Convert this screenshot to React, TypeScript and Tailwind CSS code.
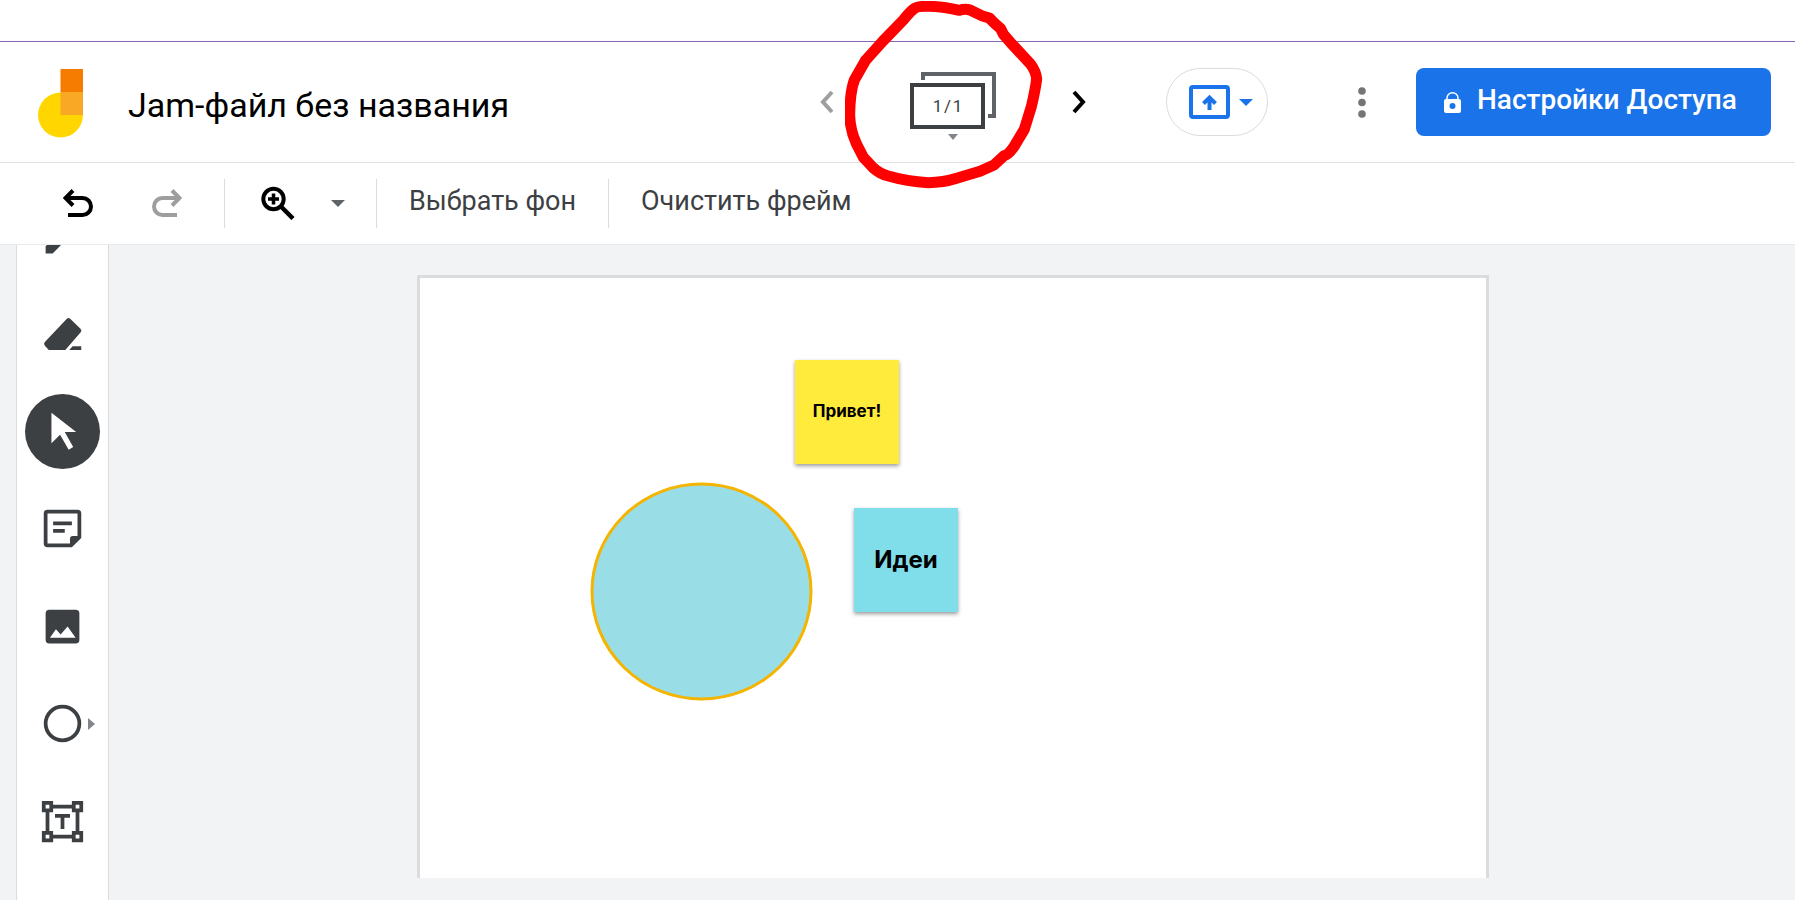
import { useState } from "react"
import type { ReactNode } from "react"

type Tool = {
  id: string
  label: string
  icon: ReactNode
  more?: boolean
}

const tools: Tool[] = [
  {
    id: "pen",
    label: "Перо",
    icon: (
      <path d="M3 17.25V21h3.75L17.81 9.94l-3.75-3.75L3 17.25zM20.71 7.04a1 1 0 0 0 0-1.41l-2.34-2.34a1 1 0 0 0-1.41 0l-1.83 1.83 3.75 3.75 1.83-1.83z" />
    ),
  },
  {
    id: "eraser",
    label: "Ластик",
    icon: (
      <>
        <path d="M16.1 3.6l5.5 5.3q.9.9.1 1.9l-8.2 9.4H4.7l-2-2.1q-1-1.1 0-2.2L14.2 3.7q1-.9 1.9-.1z" />
        <path d="M15.6 20.2l1.8-2H22v2z" />
      </>
    ),
  },
  {
    id: "select",
    label: "Выбрать",
    icon: <path d="M6.1 2v16.3l4.6-4.6 4.6 8 2.4-1.4-4.5-8h6.1z" />,
  },
  {
    id: "note",
    label: "Стикер",
    icon: (
      <>
        <path
          fillRule="evenodd"
          d="M4 2h16a2 2 0 0 1 2 2v13l-5 5H4a2 2 0 0 1-2-2V4a2 2 0 0 1 2-2zm0 2v16h12v-2.500a1.500 1.500 0 0 1 1.500-1.500H20V4z"
        />
        <path d="M7 8.200h10v2H7zM7 12.200h6.200v2H7z" />
      </>
    ),
  },
  {
    id: "image",
    label: "Изображение",
    icon: (
      <path
        fillRule="evenodd"
        d="M5 3h14a2 2 0 0 1 2 2v14a2 2 0 0 1-2 2H5a2 2 0 0 1-2-2V5a2 2 0 0 1 2-2zm.300 15h13.700l-4.300-6-3.700 4.300-2.500-2.900z"
      />
    ),
  },
  {
    id: "shape",
    label: "Круг",
    more: true,
    icon: <circle cx="12" cy="12" r="9" fill="none" stroke="currentColor" strokeWidth="2" />,
  },
  {
    id: "text",
    label: "Текстовое поле",
    icon: (
      <>
        <path
          fillRule="evenodd"
          d="M1 1h6v2h10V1h6v6h-2v10h2v6h-6v-2H7v2H1v-6h2V7H1zm6 4v2H5v10h2v2h10v-2h2V7h-2V5zM3 3v2h2V3zm16 0v2h2V3zM3 19v2h2v-2zm16 0v2h2v-2z"
        />
        <path d="M8 8h8v2h-3v6h-2v-6H8z" />
      </>
    ),
  },
]

function Logo() {
  return (
    <svg width="45" height="69" viewBox="0 0 45 69" aria-hidden="true">
      <circle cx="22.500" cy="46" r="22.500" fill="#ffd600" />
      <path d="M22.500 0H45v23H22.500z" fill="#f57c00" />
      <path d="M22.500 23H45v23H22.500z" fill="#f9a825" />
    </svg>
  )
}

function Caret({ className }: { className?: string }) {
  return (
    <svg width="14" height="7" viewBox="0 0 14 7" fill="currentColor" className={className} aria-hidden="true">
      <path d="M0 0h14L7 7z" />
    </svg>
  )
}

function Chevron({ className }: { className?: string }) {
  return (
    <svg width="14" height="24" viewBox="0 0 14 24" fill="none" stroke="currentColor" strokeWidth="4" className={className} aria-hidden="true">
      <path d="M2 2l9 10-9 10" />
    </svg>
  )
}

function Arrow({ className }: { className?: string }) {
  return (
    <svg width="30" height="30" viewBox="0 0 30 30" fill="none" stroke="currentColor" strokeWidth="4" className={className} aria-hidden="true">
      <path d="M10 1.500L2.500 9l7.500 7.500M3 9h16.500a8.500 8.500 0 0 1 0 17H5" />
    </svg>
  )
}

// hand drawn marker around the frame counter
function Marker() {
  return (
    <svg
      width="198"
      height="188"
      viewBox="135 3 594 564"
      fill="none"
      stroke="#ff0000"
      strokeWidth="33"
      strokeLinejoin="round"
      strokeLinecap="round"
      className="absolute -left-[65px] -top-[71px] z-10 max-w-none pointer-events-none"
      aria-hidden="true"
    >
      <path d="M478 31Q425 19 385 19Q350 18 340 28Q328 38 310 60L250 122L196 182L163 240Q150 275 149 345Q150 390 170 433L190 472L218 502Q240 522 265 528Q320 544 385 548Q430 548 470 535L540 514L582 495L612 467Q625 465 642 440L673 388Q684 352 694 320Q706 270 710 237Q708 215 692 193L632 128L611 104L602 86L584 70L568 54L545 47L510 30Q495 25 478 31z" />
    </svg>
  )
}

function Header() {
  return (
    <header className="flex h-[121px] items-start border-b border-[#e0e0e0] pl-[38px] pr-6 pt-[26px]">
      <div className="flex items-start pt-px">
        <a href="#" aria-label="Jamboard">
          <Logo />
        </a>
        <h1 className="ml-[45px] mt-4 whitespace-nowrap text-[34px] leading-10 text-black">Jam-файл без названия</h1>
      </div>

      <div className="ml-auto flex shrink-0 items-center">
        <nav className="flex items-center" aria-label="Фреймы">
          <button type="button" aria-label="Предыдущий фрейм" className="text-[#9e9e9e]">
            <Chevron className="rotate-180" />
          </button>
          <button type="button" className="relative mx-[76px] h-[60px] w-[86px]">
            <svg width="75" height="46" viewBox="0 0 75 46" fill="none" stroke="#5f6368" strokeWidth="4" className="absolute left-[11px] top-0" aria-hidden="true">
              <path d="M2 8V2h71v42h-6" />
            </svg>
            <span className="absolute left-0 top-[11px] flex h-[46px] w-[75px] items-center justify-center border-4 border-[#3c4043] text-[17px] leading-none text-[#3c4043]">
              1&#8202;/&#8202;1
            </span>
            <svg width="10" height="6" viewBox="0 0 10 6" fill="#80868b" className="absolute left-[38px] top-[62px]" aria-hidden="true">
              <path d="M0 0h10L5 6z" />
            </svg>
            <Marker />
          </button>
          <button type="button" aria-label="Следующий фрейм" className="text-black">
            <Chevron />
          </button>
        </nav>

        <button
          type="button"
          aria-label="Открыть на устройстве"
          className="ml-20 flex h-[68px] w-[102px] items-center justify-center gap-[9px] rounded-full border border-[#dadce0] pl-2 text-[#1a73e8]"
        >
          <svg width="41" height="34" viewBox="0 0 41 34" fill="none" stroke="currentColor" strokeWidth="4" aria-hidden="true">
            <rect x="2" y="2" width="37" height="30" rx="2" />
            <path d="M20.500 25V13M14.500 18.500l6-6 6 6" />
          </svg>
          <Caret />
        </button>

        <button type="button" aria-label="Другие действия" className="ml-[90px] text-[#757575]">
          <svg width="8" height="31" viewBox="0 0 8 31" fill="currentColor" aria-hidden="true">
            <circle cx="4" cy="4" r="3.800" />
            <circle cx="4" cy="15.500" r="3.800" />
            <circle cx="4" cy="27" r="3.800" />
          </svg>
        </button>

        <button
          type="button"
          className="ml-[50px] flex h-[68px] w-[355px] items-center gap-4 whitespace-nowrap rounded-lg bg-[#1a73e8] pb-1 pl-7 text-[28px] font-medium text-white"
        >
          <svg width="17" height="21" viewBox="0 0 17 21" fill="currentColor" className="mt-1" aria-hidden="true">
            <path
              fillRule="evenodd"
              d="M2 7h13a2 2 0 0 1 2 2v10a2 2 0 0 1-2 2H2a2 2 0 0 1-2-2V9a2 2 0 0 1 2-2zm6.500 4a3 3 0 1 0 0 6 3 3 0 0 0 0-6z"
            />
            <path d="M3 8V6a5.500 5.200 0 0 1 11 0v2" fill="none" stroke="currentColor" strokeWidth="1.500" />
          </svg>
          Настройки Доступа
        </button>
      </div>
    </header>
  )
}

function Toolbar() {
  return (
    <div className="flex h-[82px] items-center border-b border-[#e8eaed] pl-[63px] text-[27px] text-[#3c4043]">
      <button type="button" aria-label="Отменить" className="text-black">
        <Arrow />
      </button>
      <button type="button" aria-label="Повторить" className="ml-[59px] text-[#9e9e9e]">
        <Arrow className="-scale-x-100" />
      </button>
      <div className="ml-[42px] h-[49px] w-px bg-[#dadce0]" />
      <button type="button" aria-label="Масштаб" className="ml-9 pb-0.5 text-black">
        <svg width="34" height="34" viewBox="0 0 34 34" fill="none" stroke="currentColor" strokeWidth="4" aria-hidden="true">
          <circle cx="12.500" cy="13" r="10.200" />
          <path d="M20 20.500l12 12" strokeWidth="4.500" />
          <path d="M12.500 7.500v11M7 13h11" strokeWidth="3.500" />
        </svg>
      </button>
      <button type="button" aria-label="Варианты масштаба" className="ml-9">
        <Caret className="text-[#5f6368]" />
      </button>
      <div className="ml-[31px] h-[49px] w-px bg-[#dadce0]" />
      <button type="button" className="ml-8 pb-1">
        Выбрать фон
      </button>
      <div className="ml-8 h-[49px] w-px bg-[#dadce0]" />
      <button type="button" className="ml-8 pb-1">
        Очистить фрейм
      </button>
    </div>
  )
}

function Sidebar() {
  const [active, setActive] = useState("select")

  return (
    <nav className="ml-4 w-[93px] shrink-0 overflow-hidden border-x border-[#dadce0] bg-white" aria-label="Инструменты">
      {/* list is scrolled down a little, the pen is half hidden */}
      <ul className="-mt-[57px] flex h-[682px] flex-col">
        {tools.map((tool) => (
          <li key={tool.id} className="relative flex flex-1 items-center justify-center">
            <button
              type="button"
              aria-label={tool.label}
              onClick={() => setActive(tool.id)}
              className={
                active === tool.id
                  ? "flex size-[75px] items-center justify-center rounded-full bg-[#3c4043] text-white"
                  : "flex size-[75px] items-center justify-center rounded-full text-[#3c4043]"
              }
            >
              <svg width="45" height="45" viewBox="0 0 24 24" fill="currentColor" aria-hidden="true">
                {tool.icon}
              </svg>
            </button>
            {tool.more && (
              <svg width="7" height="12" viewBox="0 0 7 12" fill="#80868b" className="absolute right-[13px]" aria-hidden="true">
                <path d="M0 0l7 6-7 6z" />
              </svg>
            )}
          </li>
        ))}
      </ul>
    </nav>
  )
}

function Frame() {
  return (
    <div className="w-full max-w-[1072px] border-x-[3px] border-t-[3px] border-[#dadce0] bg-white">
      <div className="relative aspect-video font-['Inter',sans-serif] font-bold text-black">
        <svg width="223" height="219" viewBox="0 0 223 219" className="absolute left-[170px] top-[204px]" aria-hidden="true">
          <ellipse cx="111.500" cy="109.500" rx="109.500" ry="107.500" fill="#99dde6" stroke="#f4b400" strokeWidth="3" />
        </svg>
        <div className="absolute left-[375px] top-[82px] flex size-[104px] items-center justify-center bg-[#ffeb3b] text-[17px] shadow-[0_2px_4px_rgba(0,0,0,0.4)]">
          Привет!
        </div>
        <div className="absolute left-[434px] top-[230px] flex size-[104px] items-center justify-center bg-[#80deea] text-[24px] shadow-[0_2px_4px_rgba(0,0,0,0.4)]">
          Идеи
        </div>
      </div>
    </div>
  )
}

export default function App() {
  return (
    <div className="flex min-h-screen flex-col bg-white font-['Roboto',sans-serif]">
      <div className="h-[42px] border-b border-[#8e63b5]" />
      <Header />
      <Toolbar />
      <div className="flex flex-1 bg-[#f1f3f4]">
        <Sidebar />
        <main className="flex flex-1 items-start justify-center pl-0.5 pt-[30px]">
          <Frame />
        </main>
      </div>
    </div>
  )
}
